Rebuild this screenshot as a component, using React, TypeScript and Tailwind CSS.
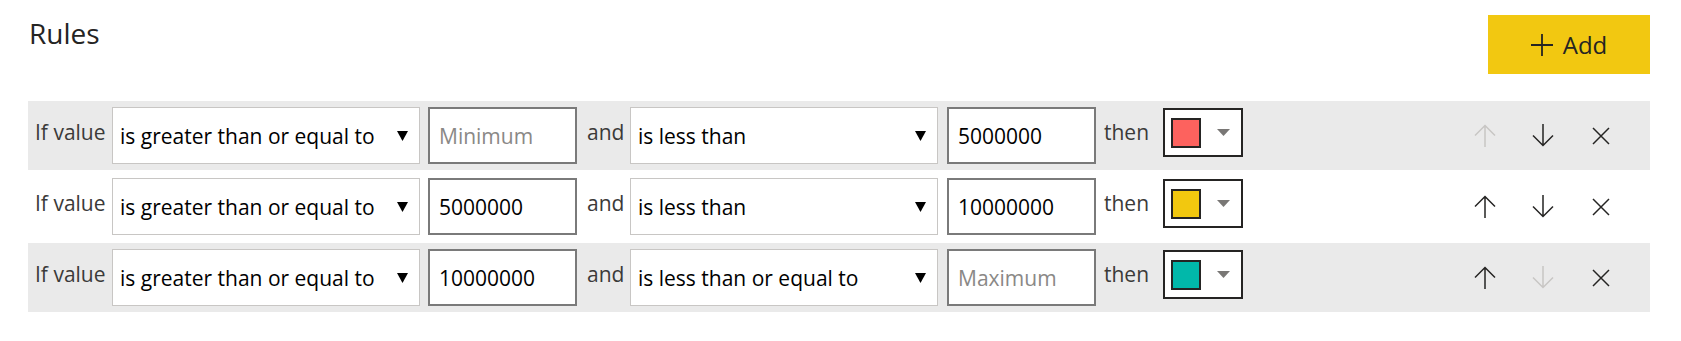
import React from "react";

type Rule = {
  op1: string;
  v1: string;
  ph1: string;
  op2: string;
  v2: string;
  ph2: string;
  color: string;
  shaded: boolean;
  upOff?: boolean;
  downOff?: boolean;
};

const rules: Rule[] = [
  {
    op1: "is greater than or equal to",
    v1: "",
    ph1: "Minimum",
    op2: "is less than",
    v2: "5000000",
    ph2: "",
    color: "bg-[#fd625e]",
    shaded: true,
    upOff: true,
  },
  {
    op1: "is greater than or equal to",
    v1: "5000000",
    ph1: "",
    op2: "is less than",
    v2: "10000000",
    ph2: "",
    color: "bg-[#f2c80f]",
    shaded: false,
  },
  {
    op1: "is greater than or equal to",
    v1: "10000000",
    ph1: "",
    op2: "is less than or equal to",
    v2: "",
    ph2: "Maximum",
    color: "bg-[#01b8aa]",
    shaded: true,
    downOff: true,
  },
];

function Dropdown(props: { value: string }) {
  return (
    <div className="flex h-[57px] w-[308px] shrink-0 items-center justify-between border border-[#c8c6c4] bg-white pl-[7px] pr-[11px] text-[21px] text-black">
      <span className="pt-[2px]">{props.value}</span>
      <svg width="11" height="10" viewBox="0 0 11 10">
        <polygon points="0,0 11,0 5.5,10" fill="#000" />
      </svg>
    </div>
  );
}

function Field(props: { value: string; placeholder: string }) {
  return (
    <div className="flex h-[57px] w-[149px] shrink-0 items-center border-2 border-[#7a7a7a] bg-white pl-[9px] text-[21px]">
      {props.value ? (
        <span className="pt-[2px] text-black">{props.value}</span>
      ) : (
        <span className="pt-[2px] text-[#8a8886]">{props.placeholder}</span>
      )}
    </div>
  );
}

function Label(props: { text: string; className: string }) {
  return (
    <div
      className={
        "shrink-0 self-start pt-[17px] text-[21px] leading-[28px] text-[#3b3a39] " +
        props.className
      }
    >
      {props.text}
    </div>
  );
}

function ArrowUp(props: { off?: boolean }) {
  return (
    <svg width="22" height="23" viewBox="0 0 22 23" fill="none" stroke={props.off ? "#c8c6c4" : "#252423"} strokeWidth="1.5">
      <path d="M11 1.5V23M1 11.5L11 1.5L21 11.5" />
    </svg>
  );
}

function ArrowDown(props: { off?: boolean }) {
  return (
    <svg width="22" height="23" viewBox="0 0 22 23" fill="none" stroke={props.off ? "#c8c6c4" : "#252423"} strokeWidth="1.5">
      <path d="M11 0V21.5M1 11.5L11 21.5L21 11.5" />
    </svg>
  );
}

function Close() {
  return (
    <svg width="18" height="18" viewBox="0 0 18 18" fill="none" stroke="#252423" strokeWidth="1.5">
      <path d="M1 1L17 17M17 1L1 17" />
    </svg>
  );
}

function RuleRow(props: { rule: Rule }) {
  const r = props.rule;
  return (
    <div
      className={
        "flex h-[69px] items-center " + (r.shaded ? "bg-[#eaeaea]" : "bg-white")
      }
    >
      <Label text="If value" className="w-[84px] pl-[7px]" />
      <Dropdown value={r.op1} />
      <div className="w-[8px] shrink-0" />
      <Field value={r.v1} placeholder={r.ph1} />
      <Label text="and" className="w-[53px] pl-[10px]" />
      <Dropdown value={r.op2} />
      <div className="w-[9px] shrink-0" />
      <Field value={r.v2} placeholder={r.ph2} />
      <Label text="then" className="w-[67px] pl-[8px]" />
      <div className="mt-[7px] flex h-[49px] w-[80px] shrink-0 items-center self-start border-2 border-[#252423] bg-white pl-[6px]">
        <div className={"h-[30px] w-[30px] border-2 border-[#252423] " + r.color} />
        <svg className="ml-[16px]" width="13" height="7" viewBox="0 0 13 7">
          <polygon points="0,0 13,0 6.5,7" fill="#797775" />
        </svg>
      </div>
      <div className="ml-auto flex items-center pr-[20px]">
        <div className="flex w-[58px] justify-center">
          <ArrowUp off={r.upOff} />
        </div>
        <div className="flex w-[58px] justify-center">
          <ArrowDown off={r.downOff} />
        </div>
        <div className="flex w-[58px] justify-center">
          <Close />
        </div>
      </div>
    </div>
  );
}

export default function App() {
  return (
    <div
      className="h-[341px] w-[1681px] bg-white pl-[28px] pr-[31px] pt-[15px]"
      style={{ fontFamily: '"Segoe UI", "Open Sans", sans-serif' }}
    >
      <div className="flex h-[59px] items-start justify-between">
        <h1 className="-mt-[2px] pl-[1px] text-[28px] leading-[40px] text-[#252423]">Rules</h1>
        <button className="flex h-[59px] w-[162px] items-center justify-center gap-[10px] bg-[#f2c811] text-[24px] text-[#252423]">
          <svg width="22" height="22" viewBox="0 0 22 22" fill="none" stroke="#252423" strokeWidth="1.8">
            <path d="M11 0V22M0 11H22" />
          </svg>
          <span>Add</span>
        </button>
      </div>
      <div className="mt-[27px] flex flex-col gap-[2px]">
        {rules.map((r, i) => (
          <RuleRow key={i} rule={r} />
        ))}
      </div>
    </div>
  );
}
